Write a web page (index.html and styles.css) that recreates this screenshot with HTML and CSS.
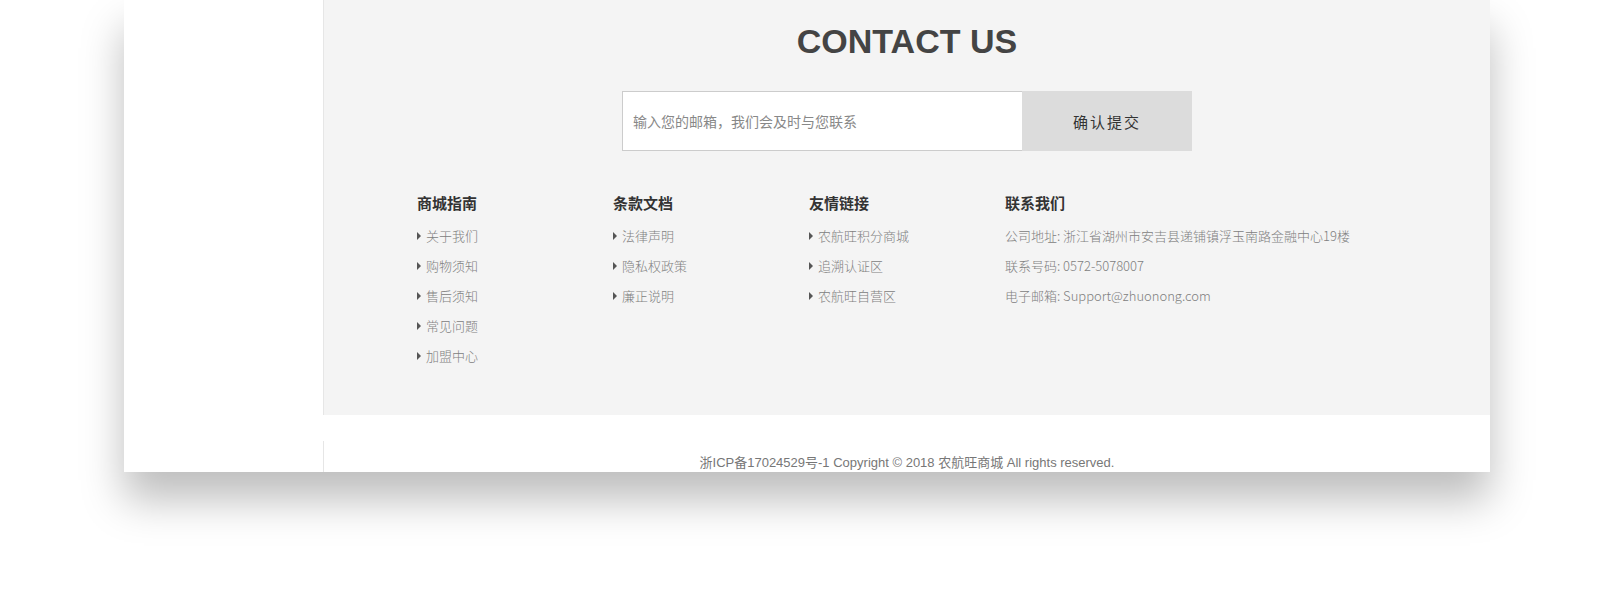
FILE: index.html
```html
<!DOCTYPE html>
<html lang="zh-CN">
<head>
    <meta charset="UTF-8">
    <meta name="viewport" content="width=device-width, initial-scale=1.0">
    <title>联系我们 - 农航旺商城</title>
    <link rel="stylesheet" href="styles.css">
</head>
<body>

    <div class="page">
        <div class="frame">
            <div class="main">
                <div class="side"></div>

                <div class="contact">
                    <h2 class="contact-title">CONTACT US</h2>

                    <form class="subscribe" onsubmit="return false;">
                        <input type="text" class="subscribe-input" placeholder="输入您的邮箱，我们会及时与您联系">
                        <button type="submit" class="subscribe-button">确认提交</button>
                    </form>

                    <div class="links">
                        <div class="col">
                            <h3>商城指南</h3>
                            <ul class="arrow-list">
                                <li>关于我们</li>
                                <li>购物须知</li>
                                <li>售后须知</li>
                                <li>常见问题</li>
                                <li>加盟中心</li>
                            </ul>
                        </div>
                        <div class="col">
                            <h3>条款文档</h3>
                            <ul class="arrow-list">
                                <li>法律声明</li>
                                <li>隐私权政策</li>
                                <li>廉正说明</li>
                            </ul>
                        </div>
                        <div class="col">
                            <h3>友情链接</h3>
                            <ul class="arrow-list">
                                <li>农航旺积分商城</li>
                                <li>追溯认证区</li>
                                <li>农航旺自营区</li>
                            </ul>
                        </div>
                        <div class="col col-wide">
                            <h3>联系我们</h3>
                            <ul class="info-list">
                                <li>公司地址: 浙江省湖州市安吉县递铺镇浮玉南路金融中心19楼</li>
                                <li>联系号码: 0572-5078007</li>
                                <li>电子邮箱: Support@zhuonong.com</li>
                            </ul>
                        </div>
                    </div>
                </div>
            </div>

            <div class="bottom">
                <div class="copyright">浙ICP备17024529号-1 Copyright © 2018 农航旺商城 All rights reserved.</div>
            </div>
        </div>
    </div>

</body>
</html>
```

FILE: styles.css
```css
body {
    margin: 0;
    background-color: #fff;
    font-family: "Noto Sans CJK SC", "Liberation Sans", sans-serif;
}
ul {
    list-style: none;
    margin: 0;
    padding: 0;
}
.page {
    padding-bottom: 128px;
}
.frame {
    width: 1366px;
    height: 472px;
    margin-left: 124px;
    overflow: hidden;
    background-color: #fff;
    box-shadow: 0 28px 40px rgba(0, 0, 0, 0.26);
}
.main {
    display: flex;
    height: 415px;
}
.side {
    width: 199px;
    border-right: 1px solid #e6e6e6;
    background-color: #fff;
}
.contact {
    flex: 1;
    background-color: #f4f4f4;
    padding-top: 21px;
    box-sizing: border-box;
}
.contact-title {
    margin: 0;
    text-align: center;
    font-family: "Liberation Sans", Arial, sans-serif;
    font-size: 34px;
    line-height: 40px;
    font-weight: bold;
    color: #444;
}
.subscribe {
    display: flex;
    width: 570px;
    margin: 30px auto 0;
}
.subscribe-input {
    box-sizing: border-box;
    width: 400px;
    height: 60px;
    padding: 0 10px;
    border: 1px solid #ccc;
    border-right: none;
    outline: none;
    font-family: "Noto Sans CJK SC", sans-serif;
    font-size: 14px;
    color: #555;
    background-color: #fff;
}
.subscribe-input::placeholder {
    color: #888;
}
.subscribe-button {
    width: 170px;
    height: 60px;
    border: none;
    background-color: #dcdcdc;
    font-family: "Noto Sans CJK SC", sans-serif;
    font-size: 15px;
    letter-spacing: 2px;
    color: #333;
    cursor: pointer;
}
.links {
    display: grid;
    grid-template-columns: repeat(5, 1fr);
    width: 980px;
    margin: 42px auto 0;
}
.col-wide {
    grid-column: span 2;
}
.col h3 {
    margin: 0 0 8px;
    font-size: 15px;
    line-height: 20px;
    font-weight: bold;
    color: #333;
}
.col li {
    display: flex;
    align-items: center;
    font-size: 13px;
    line-height: 30px;
    font-weight: 300;
    color: #808080;
    white-space: nowrap;
}
.arrow-list li::before {
    content: "";
    width: 0;
    height: 0;
    margin-right: 5px;
    border-left: 4px solid #555;
    border-top: 4px solid transparent;
    border-bottom: 4px solid transparent;
}
.bottom {
    height: 57px;
    padding-top: 26px;
    box-sizing: border-box;
}
.copyright {
    margin-left: 199px;
    height: 31px;
    padding-top: 14px;
    box-sizing: border-box;
    border-left: 1px solid #e6e6e6;
    text-align: center;
    font-family: "Liberation Sans", "Noto Sans CJK SC", sans-serif;
    font-size: 13px;
    line-height: 16px;
    color: #777;
}
```
